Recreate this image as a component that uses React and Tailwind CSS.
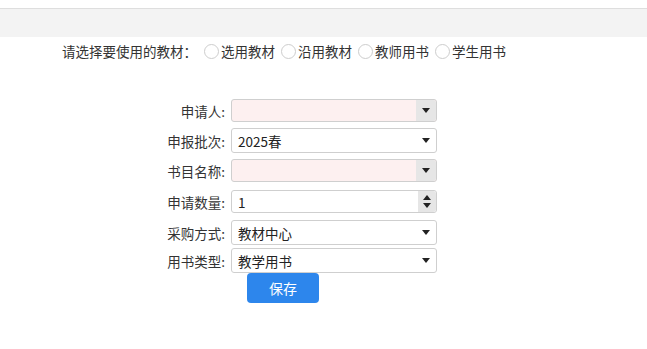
import React from "react";

const font = { fontFamily: '"Microsoft YaHei", "Noto Sans CJK SC", "Liberation Sans", sans-serif' };

function Caret({ bg }) {
  return (
    <div className={`flex h-full w-[20px] items-center justify-center ${bg ? "bg-[#e6e6e6] rounded-r-[3px]" : ""}`}>
      <svg width="8" height="5" viewBox="0 0 8 5"><path d="M0 0h8L4 5z" fill="#222" /></svg>
    </div>
  );
}

function Row({ label, mt, h, children }) {
  return (
    <div className={`flex items-center ${mt}`}>
      <div className="w-[226px] pr-[1px] text-right text-[13.5px] text-[#333]">{label}</div>
      <div className={`ml-[5px] w-[206px] ${h}`}>{children}</div>
    </div>
  );
}

function Select({ value, pink }) {
  return (
    <div className={`flex h-full items-center rounded-[3px] border border-[#cfcfcf] ${pink ? "bg-[#fdf0f0]" : "bg-white"}`}>
      <div className="flex-1 pl-[6px] text-[13.5px] text-[#222]">{value}</div>
      <Caret bg={pink} />
    </div>
  );
}

function Radio({ label }) {
  return (
    <div className="flex items-center">
      <span className="mr-[2px] inline-block h-[15px] w-[15px] rounded-full border border-[#cdcdcd] bg-white" />
      <span>{label}</span>
    </div>
  );
}

export default function App() {
  return (
    <div className="h-[349px] w-[647px] bg-white" style={font}>
      <div className="h-[8px]" />
      <div className="h-[29px] border-t border-[#dedede] bg-[#f3f3f3]" />
      <div className="mt-[4px] flex items-center gap-[6px] pl-[62px] text-[13.5px] text-[#333]">
        <span className="mr-[1px]">请选择要使用的教材：</span>
        <Radio label="选用教材" />
        <Radio label="沿用教材" />
        <Radio label="教师用书" />
        <Radio label="学生用书" />
      </div>
      <div className="mt-[38px]">
        <Row label="申请人:" mt="mt-0" h="h-[23px]">
          <Select value="" pink />
        </Row>
        <Row label="申报批次:" mt="mt-[6px]" h="h-[25px]">
          <Select value="2025春" />
        </Row>
        <Row label="书目名称:" mt="mt-[6px]" h="h-[23px]">
          <Select value="" pink />
        </Row>
        <Row label="申请数量:" mt="mt-[8px]" h="h-[23px]">
          <div className="flex h-full items-center rounded-[3px] border border-[#cfcfcf] bg-white">
            <div className="flex-1 pl-[6px] text-[13.5px] text-[#222]">1</div>
            <div className="flex h-full w-[18px] flex-col items-center justify-center gap-[3px] rounded-r-[3px] bg-[#e6e6e6]">
              <svg width="8" height="5" viewBox="0 0 8 5"><path d="M0 5h8L4 0z" fill="#222" /></svg>
              <svg width="8" height="5" viewBox="0 0 8 5"><path d="M0 0h8L4 5z" fill="#222" /></svg>
            </div>
          </div>
        </Row>
        <Row label="采购方式:" mt="mt-[7px]" h="h-[25px]">
          <Select value="教材中心" />
        </Row>
        <Row label="用书类型:" mt="mt-[3px]" h="h-[25px]">
          <Select value="教学用书" />
        </Row>
        <div className="ml-[247px] mt-0 flex h-[30px] w-[72px] items-center justify-center rounded-[4px] bg-[#2d86ec] text-[14px] text-white">
          保存
        </div>
      </div>
    </div>
  );
}
